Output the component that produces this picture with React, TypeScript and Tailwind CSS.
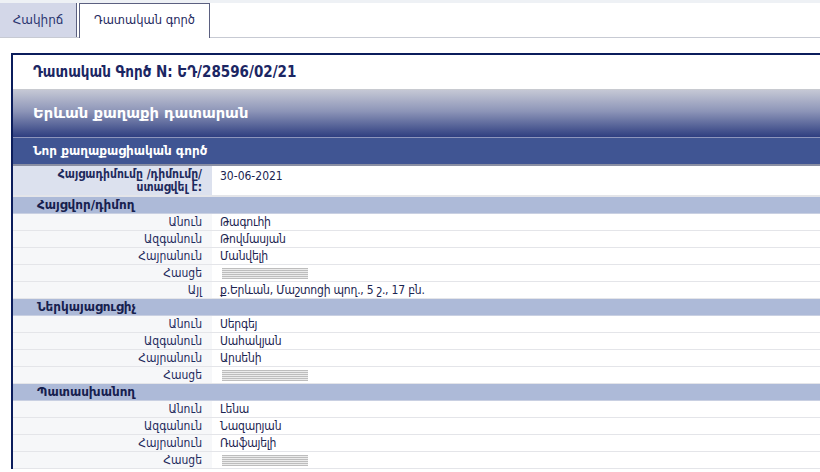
import React from 'react'

type Row = { label: string; value?: string; masked?: boolean }

const applicant: Row[] = [
  { label: 'Անուն', value: 'Թագուհի' },
  { label: 'Ազգանուն', value: 'Թովմասյան' },
  { label: 'Հայրանուն', value: 'Մանվելի' },
  { label: 'Հասցե', masked: true },
  { label: 'Այլ', value: 'ք.Երևան, Մաշտոցի պող., 5 շ., 17 բն.' },
]

const representative: Row[] = [
  { label: 'Անուն', value: 'Սերգեյ' },
  { label: 'Ազգանուն', value: 'Սահակյան' },
  { label: 'Հայրանուն', value: 'Արսենի' },
  { label: 'Հասցե', masked: true },
]

const defendant: Row[] = [
  { label: 'Անուն', value: 'Լենա' },
  { label: 'Ազգանուն', value: 'Նազարյան' },
  { label: 'Հայրանուն', value: 'Ռաֆայելի' },
  { label: 'Հասցե', masked: true },
]

const cond = "font-['DejaVu_Sans_Condensed','DejaVu_Sans',sans-serif] font-stretch-condensed"

const Masked = () => (
  <div className="h-[11px] w-[86px] mt-[3px] ml-[2px] bg-[repeating-linear-gradient(0deg,#bdbdbd_0px,#bdbdbd_1px,#ebebeb_1px,#ebebeb_2px)]" />
)

const DataRow = ({ row }: { row: Row }) => (
  <div className={`grid grid-cols-[199px_1fr] border-b border-[#e4e5e9] h-[17px] ${cond}`}>
    <div className="bg-[#f6f7f9] text-right pr-[10px] text-[#1e2a5c] leading-[16px]">{row.label}</div>
    <div className="pl-[8px] text-[#1b2450] leading-[16px] tracking-[-0.2px]">
      {row.masked ? <Masked /> : row.value}
    </div>
  </div>
)

const Section = ({ title, rows }: { title: string; rows: Row[] }) => (
  <div>
    <div className="bg-[#adbad8] h-[17px] leading-[16px] pl-[24px] font-bold text-[#16204e] border-b border-[#c9d0e2]">
      {title}
    </div>
    {rows.map(r => <DataRow key={r.label} row={r} />)}
  </div>
)

export default function App() {
  return (
    <div className="w-[820px] h-[472px] overflow-hidden bg-white font-['DejaVu_Sans',sans-serif] text-[12px]">
      <div className="h-[3px] bg-[#eef1f5]" />
      <div className="flex h-[35px] border-b border-[#c7cad3]">
        <div className="w-[77px] bg-[#d3d7e8] border-r border-[#5b6080] flex items-center justify-center text-[#2a3570]">
          Հակիրճ
        </div>
        <div className="ml-[2px] w-[131px] bg-white border border-b-0 border-[#5b6080] flex items-center justify-center text-[#1f2a60] -mb-px h-[35px] text-[11.5px]">
          Դատական գործ
        </div>
      </div>

      <div className="ml-[11px] mt-[15px] border-l-2 border-t-2 border-[#0b1d5c]">
        <div className={`h-[35px] flex items-center pl-[20px] text-[15px] font-bold text-[#1b2663] border-b border-[#c8cad0] ${cond}`}>
          Դատական Գործ N: ԵԴ/28596/02/21
        </div>
        <div className="h-[48px] flex items-center pl-[20px] text-[14.7px] font-bold text-white bg-[linear-gradient(to_bottom,#c5c8d5,#8d95b8_45%,#2e3e80)] border-b border-[#8d95bb]">
          Երևան քաղաքի դատարան
        </div>
        <div className="h-[28px] flex items-center pl-[20px] font-bold text-white bg-[#405593] border-b-2 border-[#8a8fa3]">
          Նոր քաղաքացիական գործ
        </div>
        <div className={`grid grid-cols-[199px_1fr] h-[31px] border-b-2 border-[#e4e5e9] ${cond}`}>
          <div className="bg-[#dce1ee] text-right pr-[10px] pt-[2px] leading-[13px] font-bold text-[#1e2a5c]">
            Հայցադիմումը /դիմումը/<br />ստացվել է:
          </div>
          <div className="pl-[8px] pt-[1px] text-[#1b2450]">30-06-2021</div>
        </div>
        <Section title="Հայցվոր/դիմող" rows={applicant} />
        <Section title="Ներկայացուցիչ" rows={representative} />
        <Section title="Պատասխանող" rows={defendant} />
      </div>
    </div>
  )
}
